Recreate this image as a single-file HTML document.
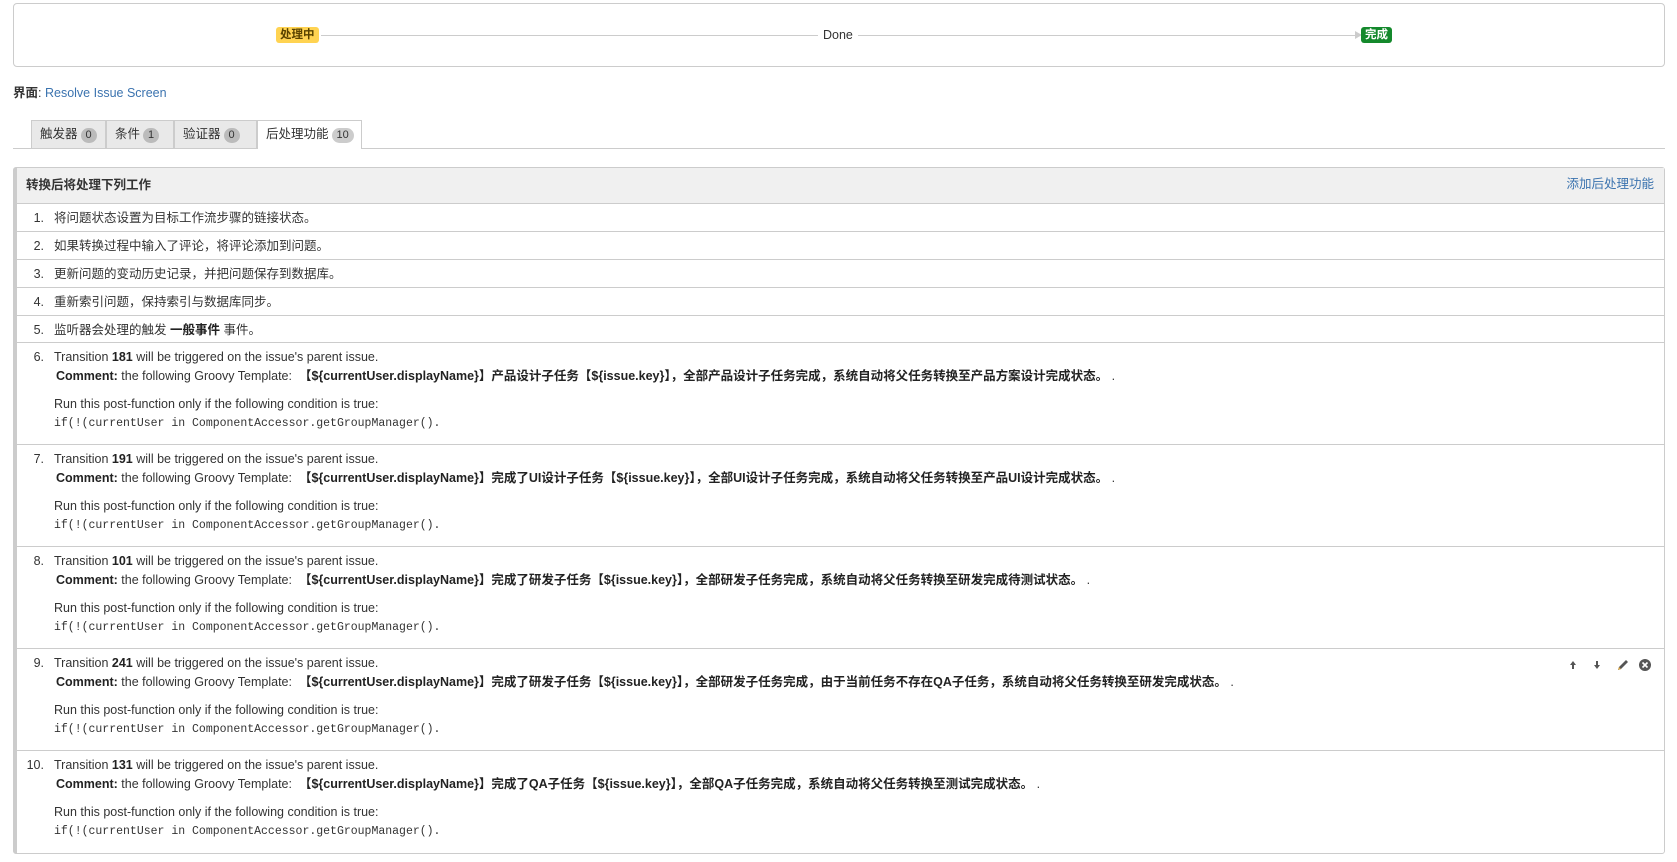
<!DOCTYPE html>
<html><head><meta charset="utf-8">
<style>
*{margin:0;padding:0;box-sizing:border-box}
body{width:1677px;height:862px;background:#fff;font-family:"Liberation Sans","Noto Sans CJK SC",sans-serif;font-size:12.5px;color:#333;position:relative;overflow:hidden}
.abs{position:absolute}
.box{left:13px;top:3px;width:1652px;height:64px;border:1px solid #ccc;border-radius:4px}
.line{height:1px;background:#ccc}
.lz{font-size:11.5px;font-weight:bold;padding:0 4px;border-radius:3px;line-height:16px;height:16px}
.tab{top:120px;height:28px;border:1px solid #ccc;border-bottom:none;background:#e9e9e9;line-height:27px;padding-left:8px;font-size:12.5px;color:#333}
.cnt{display:inline-block;background:#bbb;border-radius:8px;padding:0 5px;line-height:15px;font-size:11px;margin-left:3px;color:#333}
.panel{left:13px;top:167px;width:1652px;height:687px;border:1px solid #ccc;border-left:4px solid #ccc;border-radius:3px}
.hd{left:17px;top:168px;width:1647px;height:36px;background:#f0f0f0;border-bottom:1px solid #ccc}
.row{left:17px;width:1647px;border-bottom:1px solid #ccc}
.n{position:absolute;text-align:right;line-height:16px}
.t{position:absolute;left:37px;white-space:nowrap;line-height:16px}
code{font-family:"Liberation Mono",monospace;font-size:11.5px}
b{color:#222}
</style></head><body>
<div class="abs box"></div>
<div class="abs line" style="left:321px;top:35px;width:497px"></div>
<div class="abs line" style="left:858px;top:35px;width:500px"></div>
<div class="abs" style="left:1355px;top:31px;width:0;height:0;border-left:7px solid #ccc;border-top:4px solid transparent;border-bottom:4px solid transparent"></div>
<div class="abs lz" style="left:276px;top:27px;background:#ffd351;color:#594300">处理中</div>
<div class="abs" style="left:823px;top:27px;line-height:16px;font-size:12.5px">Done</div>
<div class="abs lz" style="left:1361px;top:27px;background:#14892c;color:#fff">完成</div>

<div class="abs" style="left:13px;top:85px;font-size:12.5px;line-height:16px"><b style="color:#333">界面</b>: <span style="color:#3b73af">Resolve Issue Screen</span></div>

<div class="abs line" style="left:13px;top:148px;width:1652px"></div>
<div class="abs tab" style="left:31px;width:75px">触发器<span class="cnt">0</span></div>
<div class="abs tab" style="left:106px;width:68px">条件<span class="cnt">1</span></div>
<div class="abs tab" style="left:174px;width:83px">验证器<span class="cnt">0</span></div>
<div class="abs tab" style="left:257px;width:105px;background:#fff;height:29px">后处理功能<span class="cnt" style="background:#ccc">10</span></div>

<div class="abs panel"></div>
<div class="abs hd"><div class="abs" style="left:9px;top:9px;font-weight:bold;font-size:12.5px;line-height:16px">转换后将处理下列工作</div><div class="abs" style="right:10px;top:8px;color:#3b73af;font-size:12.5px;line-height:16px">添加后处理功能</div></div>

<div class="abs row" style="top:204px;height:28px"><span class="n" style="top:6px;left:0;width:27px">1.</span><span class="t" style="top:6px">将问题状态设置为目标工作流步骤的链接状态。</span></div>
<div class="abs row" style="top:232px;height:28px"><span class="n" style="top:6px;left:0;width:27px">2.</span><span class="t" style="top:6px">如果转换过程中输入了评论，将评论添加到问题。</span></div>
<div class="abs row" style="top:260px;height:28px"><span class="n" style="top:6px;left:0;width:27px">3.</span><span class="t" style="top:6px">更新问题的变动历史记录，并把问题保存到数据库。</span></div>
<div class="abs row" style="top:288px;height:28px"><span class="n" style="top:6px;left:0;width:27px">4.</span><span class="t" style="top:6px">重新索引问题，保持索引与数据库同步。</span></div>
<div class="abs row" style="top:316px;height:27px"><span class="n" style="top:6px;left:0;width:27px">5.</span><span class="t" style="top:6px">监听器会处理的触发 <b>一般事件</b> 事件。</span></div>

<div class="abs row" style="top:343px;height:102px">
<span class="n" style="top:6px;left:0;width:27px">6.</span>
<span class="t" style="top:6px">Transition <b>181</b> will be triggered on the issue's parent issue.</span>
<span class="t" style="top:25px;left:39px"><b>Comment:</b> the following Groovy Template: &nbsp;<b>【${currentUser.displayName}】产品设计子任务【${issue.key}】，全部产品设计子任务完成，系统自动将父任务转换至产品方案设计完成状态。</b> .</span>
<span class="t" style="top:53px">Run this post-function only if the following condition is true:</span>
<span class="t" style="top:71px"><code>if(!(currentUser in ComponentAccessor.getGroupManager().</code></span>
</div>
<div class="abs row" style="top:445px;height:102px">
<span class="n" style="top:6px;left:0;width:27px">7.</span>
<span class="t" style="top:6px">Transition <b>191</b> will be triggered on the issue's parent issue.</span>
<span class="t" style="top:25px;left:39px"><b>Comment:</b> the following Groovy Template: &nbsp;<b>【${currentUser.displayName}】完成了UI设计子任务【${issue.key}】，全部UI设计子任务完成，系统自动将父任务转换至产品UI设计完成状态。</b> .</span>
<span class="t" style="top:53px">Run this post-function only if the following condition is true:</span>
<span class="t" style="top:71px"><code>if(!(currentUser in ComponentAccessor.getGroupManager().</code></span>
</div>
<div class="abs row" style="top:547px;height:102px">
<span class="n" style="top:6px;left:0;width:27px">8.</span>
<span class="t" style="top:6px">Transition <b>101</b> will be triggered on the issue's parent issue.</span>
<span class="t" style="top:25px;left:39px"><b>Comment:</b> the following Groovy Template: &nbsp;<b>【${currentUser.displayName}】完成了研发子任务【${issue.key}】，全部研发子任务完成，系统自动将父任务转换至研发完成待测试状态。</b> .</span>
<span class="t" style="top:53px">Run this post-function only if the following condition is true:</span>
<span class="t" style="top:71px"><code>if(!(currentUser in ComponentAccessor.getGroupManager().</code></span>
</div>
<div class="abs row" style="top:649px;height:102px">
<span class="n" style="top:6px;left:0;width:27px">9.</span>
<span class="t" style="top:6px">Transition <b>241</b> will be triggered on the issue's parent issue.</span>
<span class="t" style="top:25px;left:39px"><b>Comment:</b> the following Groovy Template: &nbsp;<b>【${currentUser.displayName}】完成了研发子任务【${issue.key}】，全部研发子任务完成，由于当前任务不存在QA子任务，系统自动将父任务转换至研发完成状态。</b> .</span>
<span class="t" style="top:53px">Run this post-function only if the following condition is true:</span>
<span class="t" style="top:71px"><code>if(!(currentUser in ComponentAccessor.getGroupManager().</code></span>
<svg class="abs" style="left:1550px;top:8px" width="90" height="16" viewBox="0 0 90 16">
<path d="M6 4 L3 8 H5 V12 H7 V8 H9 Z" fill="#555"/>
<path d="M30 12 L27 8 H29 V4 H31 V8 H33 Z" fill="#555"/>
<path d="M51 13 L52 10 L59 3 L61 5 L54 12 Z" fill="#555"/><path d="M51 13 L52 10 L54 12Z" fill="#d9a440"/>
<circle cx="78" cy="8" r="6" fill="#555"/><path d="M75.5 5.5 L80.5 10.5 M80.5 5.5 L75.5 10.5" stroke="#fff" stroke-width="1.6"/>
</svg>
</div>
<div class="abs row" style="top:751px;height:102px;border-bottom:none">
<span class="n" style="top:6px;left:0;width:27px">10.</span>
<span class="t" style="top:6px">Transition <b>131</b> will be triggered on the issue's parent issue.</span>
<span class="t" style="top:25px;left:39px"><b>Comment:</b> the following Groovy Template: &nbsp;<b>【${currentUser.displayName}】完成了QA子任务【${issue.key}】，全部QA子任务完成，系统自动将父任务转换至测试完成状态。</b> .</span>
<span class="t" style="top:53px">Run this post-function only if the following condition is true:</span>
<span class="t" style="top:71px"><code>if(!(currentUser in ComponentAccessor.getGroupManager().</code></span>
</div>
</body></html>
